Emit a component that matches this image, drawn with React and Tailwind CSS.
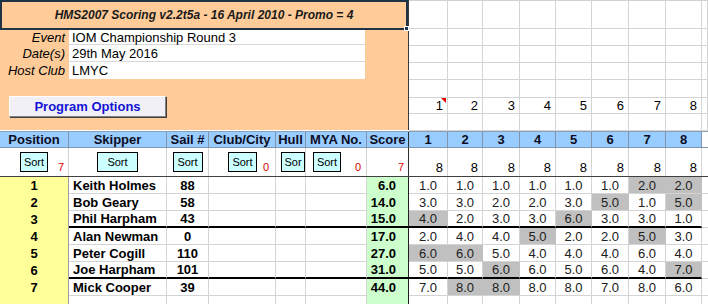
import React from "react";

// column widths follow the sheet: Position .. race 8, plus the cut-off column
const COLS =
  "grid grid-cols-[69px_98px_42px_67px_30px_61px_42px_39px_35px_37px_36px_36px_37px_37px_36px_6px]";
const TOP_COLS = "grid grid-cols-[39px_35px_37px_36px_36px_37px_37px_36px_6px]";

const topRowHeights = ["h-[28px]", "h-[17px]", "h-[17px]", "h-[17px]", "h-[18px]", "h-[16px]", "h-[17px]"];

const results = [
  { pos: 1, name: "Keith Holmes", sail: 88, score: "6.0", r: [1, 1, 1, 1, 1, 1, 2, 2], d: [6, 7] },
  { pos: 2, name: "Bob Geary", sail: 58, score: "14.0", r: [3, 3, 2, 2, 3, 5, 1, 5], d: [5, 7] },
  { pos: 3, name: "Phil Harpham", sail: 43, score: "15.0", r: [4, 2, 3, 3, 6, 3, 3, 1], d: [0, 4], thick: true },
  { pos: 4, name: "Alan Newman", sail: 0, score: "17.0", r: [2, 4, 4, 5, 2, 2, 5, 3], d: [3, 6] },
  { pos: 5, name: "Peter Cogill", sail: 110, score: "27.0", r: [6, 6, 5, 4, 4, 4, 6, 4], d: [0, 1] },
  { pos: 6, name: "Joe Harpham", sail: 101, score: "31.0", r: [5, 5, 6, 6, 5, 6, 4, 7], d: [2, 7], thick: true },
  { pos: 7, name: "Mick Cooper", sail: 39, score: "44.0", r: [7, 8, 8, 8, 8, 7, 8, 6], d: [1, 2] },
];

const races = [1, 2, 3, 4, 5, 6, 7, 8];

const SortBtn = ({ w = "w-[28px]", label = "Sort" }) => (
  <div
    className={`${w} h-[20px] bg-[#ccffff] border border-black flex items-center justify-center text-[11px] leading-none`}
  >
    {label}
  </div>
);

const TopGrid = () => (
  <div className="flex-1 border-t border-[#d0d0d0]">
    {topRowHeights.map((h, ri) => (
      <div key={ri} className={`${TOP_COLS} ${h} border-b border-[#d4d4d4]`}>
        {[0, 1, 2, 3, 4, 5, 6, 7, 8].map((ci) => (
          <div
            key={ci}
            className="relative border-r border-[#d4d4d4] flex items-end justify-end pr-[4px] pb-[1px] leading-none"
          >
            {ri === 5 && ci < 8 ? ci + 1 : ""}
            {ri === 5 && ci === 0 && (
              <span className="absolute top-0 right-[1px] w-0 h-0 border-l-[5px] border-l-transparent border-t-[5px] border-t-[#e00000]" />
            )}
          </div>
        ))}
      </div>
    ))}
  </div>
);

const InfoPanel = () => (
  <div className="w-[409px] h-[130px] bg-[#ffcc99] border-r border-[#3a3a3a] flex flex-col">
    <div className="relative h-[30px] border-2 border-[#1f3347] flex items-center justify-center font-bold italic text-[12px] text-[#1a1a1a]">
      HMS2007 Scoring v2.2t5a - 16 April 2010 - Promo = 4
      <span className="absolute -right-[3px] -bottom-[3px] w-[5px] h-[5px] bg-[#1f3347] border border-white" />
    </div>
    <div className="flex flex-col">
      {[
        ["Event", "IOM Championship Round 3", "h-[15px]", true],
        ["Date(s)", "29th May 2016", "h-[17px]", true],
        ["Host Club", "LMYC", "h-[17px]", false],
      ].map(([label, value, h, line]) => (
        <div key={label} className={`flex ${h}`}>
          <div className="w-[69px] italic text-right pr-[4px] flex items-center justify-end leading-none">
            {label}
          </div>
          <div
            className={`w-[296px] bg-white pl-[3px] flex items-center leading-none ${
              line ? "border-b border-[#d8d8d8]" : ""
            }`}
          >
            {value}
          </div>
        </div>
      ))}
    </div>
    <div className="pl-[9px] pt-[17px]">
      <div className="w-[157px] h-[21px] bg-[#f0f0f6] border border-t-white border-l-white border-b-[#808080] border-r-[#808080] shadow-[1px_1px_0_#404040] flex items-center justify-center font-bold text-[#1414d4] leading-none">
        Program Options
      </div>
    </div>
  </div>
);

const HeaderRow = () => {
  const labels = ["Position", "Skipper", "Sail #", "Club/City", "Hull", "MYA No.", "Score", ...races.map(String), ""];
  return (
    <div className={`${COLS} h-[17px] bg-[#99ccff] border-t border-[#8aa0b8]`}>
      {labels.map((l, i) => (
        <div
          key={i}
          className={`border-r border-b border-[#7f95ad] flex items-center justify-center font-bold leading-none whitespace-nowrap overflow-hidden text-[#0c0c24] ${
            i === 6 ? "border-r-[#303030]" : ""
          } ${i === 15 ? "bg-white border-r-0" : ""}`}
        >
          {l}
        </div>
      ))}
    </div>
  );
};

const SortRow = () => (
  <div className={`${COLS} h-[29px] border-b border-[#404040]`}>
    <div className="relative border-r border-[#d4d4d4] flex items-center justify-center">
      <SortBtn />
      <span className="absolute right-[4px] bottom-[3px] text-[11px] leading-none text-[#e00000]">7</span>
    </div>
    <div className="border-r border-[#d4d4d4] flex items-center justify-center">
      <SortBtn w="w-[41px]" />
    </div>
    <div className="border-r border-[#d4d4d4] flex items-center justify-center">
      <SortBtn w="w-[30px]" />
    </div>
    <div className="relative border-r border-[#d4d4d4] flex items-center pl-[19px]">
      <SortBtn w="w-[29px]" />
      <span className="absolute right-[6px] bottom-[3px] text-[11px] leading-none text-[#e00000]">0</span>
    </div>
    <div className="border-r border-[#d4d4d4] flex items-center pl-[5px]">
      <SortBtn w="w-[24px]" label="Sor" />
    </div>
    <div className="relative border-r border-[#d4d4d4] flex items-center pl-[7px]">
      <SortBtn w="w-[28px]" />
      <span className="absolute right-[5px] bottom-[3px] text-[11px] leading-none text-[#e00000]">0</span>
    </div>
    <div className="relative border-r border-[#303030]">
      <span className="absolute right-[4px] bottom-[3px] text-[11px] leading-none text-[#e00000]">7</span>
    </div>
    {races.map((r) => (
      <div key={r} className="border-r border-[#d4d4d4] flex items-end justify-end pr-[4px] pb-[2px] leading-none">
        8
      </div>
    ))}
    <div />
  </div>
);

const ResultRow = ({ row }) => {
  const line = row.thick ? "border-b-2 border-b-black" : "border-b border-b-[#d4d4d4]";
  return (
    <div className={`${COLS} h-[17px] leading-none`}>
      <div className="bg-[#ffff99] border-r border-[#a0a0a0] flex items-center justify-center font-bold">
        {row.pos}
      </div>
      <div className={`${line} border-r border-r-[#d4d4d4] flex items-center pl-[4px] font-bold whitespace-nowrap`}>
        {row.name}
      </div>
      <div className={`${line} border-r border-r-[#d4d4d4] flex items-center justify-center font-bold`}>
        {row.sail}
      </div>
      <div className={`${line} border-r border-r-[#d4d4d4]`} />
      <div className={`${line} border-r border-r-[#d4d4d4]`} />
      <div className={`${line} border-r border-r-[#d4d4d4]`} />
      <div
        className={`${row.thick ? "border-b-2 border-b-black" : ""} bg-[#ccffcc] border-r border-r-[#202020] flex items-center justify-end pr-[12px] font-bold`}
      >
        {row.score}
      </div>
      {row.r.map((v, i) => {
        const drop = row.d.includes(i);
        return (
          <div
            key={i}
            className={`${line} border-r ${
              drop ? "bg-[#c0c0c0] border-r-[#c0c0c0]" : "border-r-[#d4d4d4]"
            } flex items-center justify-center text-[#202020]`}
          >
            {v.toFixed(1)}
          </div>
        );
      })}
      <div className={row.thick ? "border-b border-b-[#d4d4d4]" : "border-b border-b-[#d4d4d4]"} />
    </div>
  );
};

const EmptyRow = () => (
  <div className={`${COLS} h-[17px]`}>
    <div className="bg-[#ffff99] border-r border-[#a0a0a0]" />
    {[1, 2, 3, 4, 5].map((i) => (
      <div key={i} className="border-r border-[#d4d4d4]" />
    ))}
    <div className="bg-[#ccffcc] border-r border-[#202020]" />
    {races.map((r) => (
      <div key={r} className="border-r border-[#d4d4d4]" />
    ))}
    <div />
  </div>
);

export default function App() {
  return (
    <div className="w-[708px] h-[304px] overflow-hidden bg-white text-black text-[13px] font-['Liberation_Sans',Arial,sans-serif]">
      <div className="flex">
        <InfoPanel />
        <TopGrid />
      </div>
      <HeaderRow />
      <SortRow />
      {results.map((row) => (
        <ResultRow key={row.pos} row={row} />
      ))}
      <EmptyRow />
    </div>
  );
}
